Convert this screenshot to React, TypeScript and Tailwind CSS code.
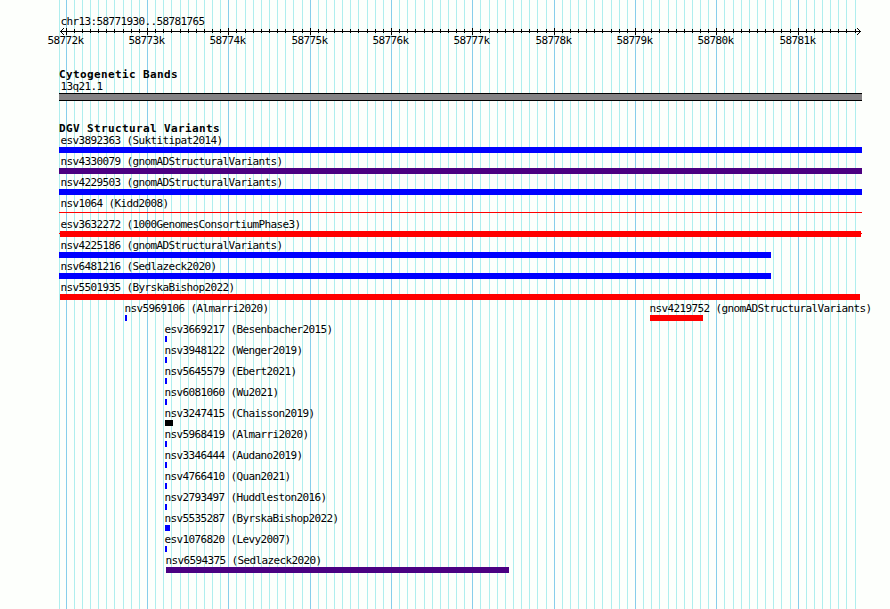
type Feature = {
  name: string;
  source: string;
  start: number;
  end: number;
  fill: string;
  labelX?: number;
  thin?: boolean;
  whiskers?: boolean;
};

const BLUE = "bg-[#0000ff]";
const RED = "bg-[#ff0000]";
const INDIGO = "bg-[#4b0082]";
const BLACK = "bg-black";

// each entry is one row of the track, start / end are in pixels
const rows: Feature[][] = [
  [{ name: "esv3892363", source: "Suktitipat2014", start: 59, end: 862, fill: BLUE, labelX: 60 }],
  [{ name: "nsv4330079", source: "gnomADStructuralVariants", start: 59, end: 862, fill: INDIGO, labelX: 60 }],
  [{ name: "nsv4229503", source: "gnomADStructuralVariants", start: 59, end: 862, fill: BLUE, labelX: 60 }],
  [{ name: "nsv1064", source: "Kidd2008", start: 59, end: 862, fill: RED, labelX: 60, thin: true }],
  [{ name: "esv3632272", source: "1000GenomesConsortiumPhase3", start: 60, end: 861, fill: RED, labelX: 60, whiskers: true }],
  [{ name: "nsv4225186", source: "gnomADStructuralVariants", start: 59, end: 771, fill: BLUE, labelX: 60 }],
  [{ name: "nsv6481216", source: "Sedlazeck2020", start: 59, end: 771, fill: BLUE, labelX: 60 }],
  [{ name: "nsv5501935", source: "ByrskaBishop2022", start: 60, end: 860, fill: RED, labelX: 60 }],
  [
    { name: "nsv5969106", source: "Almarri2020", start: 125, end: 127, fill: BLUE },
    { name: "nsv4219752", source: "gnomADStructuralVariants", start: 650, end: 703, fill: RED },
  ],
  [{ name: "esv3669217", source: "Besenbacher2015", start: 165, end: 167, fill: BLUE }],
  [{ name: "nsv3948122", source: "Wenger2019", start: 165, end: 167, fill: BLUE }],
  [{ name: "nsv5645579", source: "Ebert2021", start: 165, end: 167, fill: BLUE }],
  [{ name: "nsv6081060", source: "Wu2021", start: 165, end: 167, fill: BLUE }],
  [{ name: "nsv3247415", source: "Chaisson2019", start: 165, end: 173, fill: BLACK }],
  [{ name: "nsv5968419", source: "Almarri2020", start: 165, end: 167, fill: BLUE }],
  [{ name: "nsv3346444", source: "Audano2019", start: 165, end: 167, fill: BLUE }],
  [{ name: "nsv4766410", source: "Quan2021", start: 165, end: 167, fill: BLUE }],
  [{ name: "nsv2793497", source: "Huddleston2016", start: 165, end: 167, fill: BLUE }],
  [{ name: "nsv5535287", source: "ByrskaBishop2022", start: 165, end: 170, fill: BLUE }],
  [{ name: "esv1076820", source: "Levy2007", start: 165, end: 167, fill: BLUE }],
  [{ name: "nsv6594375", source: "Sedlazeck2020", start: 166, end: 509, fill: INDIGO }],
];

const REGION_START = 58771930;
const toX = (pos: number) => Math.round(59.95 + (pos - REGION_START) * 0.081334);

const ticks = Array.from({ length: 98 }, (_, i) => {
  const pos = 58772000 + i * 100;
  return { pos, x: toX(pos), major: pos % 1000 === 0 };
});

const Grid = () => (
  <svg className="absolute inset-0" width="890" height="609" shapeRendering="crispEdges">
    <rect x="59" y="0" width="1" height="609" fill="#afeeee" />
    {ticks.map(t => (
      <rect key={t.pos} x={t.x} y="0" width="1" height="609" fill={t.major ? "#87ceeb" : "#afeeee"} />
    ))}
  </svg>
);

const Ruler = () => (
  <svg className="block" width="890" height="24" viewBox="0 26 890 24">
    <g shapeRendering="crispEdges">
      <rect x="60" y="31" width="801" height="1" />
      {ticks.map(t => (
        <rect key={t.pos} x={t.x} y={t.major ? 28 : 29} width="1" height={t.major ? 7 : 4} />
      ))}
      {[1, 2, 3].map(d => (
        <g key={d}>
          <rect x={60 + d} y={31 - d} width="1" height="1" />
          <rect x={60 + d} y={31 + d} width="1" height="1" />
          <rect x={860 - d} y={31 - d} width="1" height="1" />
          <rect x={860 - d} y={31 + d} width="1" height="1" />
        </g>
      ))}
    </g>
    {ticks.filter(t => t.major).map(t => (
      <text key={t.pos} x={t.x - 18.5} y="44">
        {t.pos / 1000}k
      </text>
    ))}
  </svg>
);

const Title = ({ text }: { text: string }) => (
  <h2 className="pl-[59px] h-[13px] leading-[13px] text-[11px] font-bold tracking-[0.378px]">{text}</h2>
);

const FeatureItem = ({ feature, offset }: { feature: Feature; offset: number }) => {
  const { name, source, start, end, fill, labelX = start - 1, thin, whiskers } = feature;
  const left = Math.min(start, labelX) - offset;

  return (
    <div className="w-0 shrink-0" style={{ marginLeft: left }}>
      <div className="h-[13px] pl-[0.5px] leading-[13px]" style={{ marginLeft: labelX - offset - left }}>
        {name} ({source})
      </div>
      <div
        className={`relative ${thin ? "h-px mt-0.5" : "h-1.5"} ${fill}`}
        style={{ width: end - start, marginLeft: start - offset - left }}
      >
        {whiskers && <div className={`absolute -left-px -right-px top-0.5 h-px ${fill}`} />}
      </div>
    </div>
  );
};

const Row = ({ features }: { features: Feature[] }) => (
  <div className="flex h-[21px]">
    {features.map((f, i) => {
      const prev = features[i - 1];
      return <FeatureItem key={f.name} feature={f} offset={prev ? prev.start - 1 : 0} />;
    })}
  </div>
);

const App = () => (
  <div className="relative w-[890px] h-[609px] overflow-hidden bg-[#fdfffc] text-black fill-black whitespace-nowrap font-['DejaVu_Sans_Mono',monospace] text-[11px] tracking-[-0.623px]">
    <Grid />
    <main className="relative flex flex-col pt-[15px]">
      <div className="pl-[60.5px] h-[11px] leading-[13px]">chr13:58771930..58781765</div>
      <Ruler />

      <section className="pt-[18px]">
        <Title text="Cytogenetic Bands" />
        <div className="pl-[60.5px] h-3 leading-[11px]">13q21.1</div>
        <div className="ml-[59px] w-[803px] h-2 border-y border-black bg-[#848284]" />
      </section>

      <section className="pt-[21px]">
        <Title text="DGV Structural Variants" />
        <div className="-mt-px">
          {rows.map(row => (
            <Row key={row[0].name} features={row} />
          ))}
        </div>
      </section>
    </main>
  </div>
);

export default App;
